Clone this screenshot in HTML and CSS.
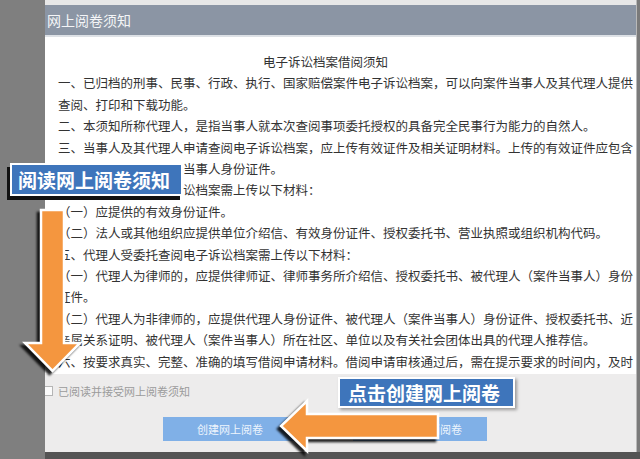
FILE: index.html
```html
<!DOCTYPE html>
<html lang="zh-CN">
<head>
<meta charset="utf-8">
<title>网上阅卷须知</title>
<link rel="stylesheet" href="styles.css">
</head>
<body>
<div class="screen">
  <div class="side"></div>
  <div class="dialog">
    <div class="topstrip"></div>
    <div class="titlebar">网上阅卷须知</div>
    <div class="content">
      <h1 class="doc-title">电子诉讼档案借阅须知</h1>
      <p>一、已归档的刑事、民事、行政、执行、国家赔偿案件电子诉讼档案，可以向案件当事人及其代理人提供<br>查阅、打印和下载功能。</p>
      <p>二、本须知所称代理人，是指当事人就本次查阅事项委托授权的具备完全民事行为能力的自然人。</p>
      <p>三、当事人及其代理人申请查阅电子诉讼档案，应上传有效证件及相关证明材料。上传的有效证件应包含<br>被代理人及其代理人的当事人身份证件。</p>
      <p>四、当事人查阅电子诉讼档案需上传以下材料：</p>
      <p>（一）应提供的有效身份证件。</p>
      <p>（二）法人或其他组织应提供单位介绍信、有效身份证件、授权委托书、营业执照或组织机构代码。</p>
      <p>五、代理人受委托查阅电子诉讼档案需上传以下材料：</p>
      <p>（一）代理人为律师的，应提供律师证、律师事务所介绍信、授权委托书、被代理人（案件当事人）身份<br>证件。</p>
      <p>（二）代理人为非律师的，应提供代理人身份证件、被代理人（案件当事人）身份证件、授权委托书、近<br>亲属关系证明、被代理人（案件当事人）所在社区、单位以及有关社会团体出具的代理人推荐信。</p>
      <p>六、按要求真实、完整、准确的填写借阅申请材料。借阅申请审核通过后，需在提示要求的时间内，及时<br>查阅电子诉讼档案。</p>
    </div>
    <div class="footer">
      <label class="agree"><span class="box"></span>已阅读并接受网上阅卷须知</label>
      <div class="actions">
        <button class="btn btn-create">创建网上阅卷</button>
        <button class="btn btn-other">取消阅卷</button>
      </div>
    </div>
  </div>
  <div class="rside"></div>
</div>
<div class="bottomband"><div class="bb-left"></div><div class="bb-right"></div></div>

<svg class="marks" width="640" height="459" viewBox="0 0 640 459" aria-hidden="true">
  <polygon points="41,210 64,210 64,343 80,343 52.5,371 25,343 41,343" fill="#f4963f" stroke="#ffffff" stroke-width="2.5"/>
  <polygon points="438,414 438,438 307,438 307,451 281,426 307,401 307,414" fill="#f4963f" stroke="#ffffff" stroke-width="2.5"/>
</svg>
<div class="callout callout-read">阅读网上阅卷须知</div>
<div class="callout callout-create">点击创建网上阅卷</div>
</body>
</html>
```

FILE: styles.css
```css
html, body {
  margin: 0;
  padding: 0;
}
body {
  width: 640px;
  height: 459px;
  overflow: hidden;
  position: relative;
  background: #7f7f7f;
  font-family: "Noto Sans CJK SC", "Noto Sans", sans-serif;
}
.screen {
  display: flex;
  height: 452px;
}
.side {
  width: 45px;
  background: #7f7f7f;
}
.rside {
  width: 3px;
  background: #7a7a7a;
}
.dialog {
  width: 592px;
  display: flex;
  flex-direction: column;
  border-right: 1px solid #b9b9b9;
  box-sizing: border-box;
  overflow: hidden;
  background: #ffffff;
}
.topstrip {
  height: 5px;
  background: #e7e7e7;
}
.titlebar {
  height: 30px;
  line-height: 30px;
  padding-left: 2px;
  background: #8b95a4;
  color: #f4f5f7;
  font-size: 14px;
  border-bottom: 2px solid #dde1e6;
}
.content {
  height: 337px;
  box-sizing: border-box;
  padding: 14px 0 0 13px;
  overflow: hidden;
  white-space: nowrap;
  font-size: 12.5px;
  line-height: 21.4px;
  color: #333333;
}
.doc-title {
  margin: 0;
  font-size: 12.5px;
  font-weight: normal;
  text-align: center;
  padding-right: 43px;
}
.content p {
  margin: 0;
}
.footer {
  height: 78px;
  box-sizing: border-box;
  background: #edecec;
  padding-top: 10px;
}
.agree {
  display: flex;
  align-items: center;
  height: 14px;
  font-size: 11px;
  color: #9b9b9b;
}
.box {
  width: 8px;
  height: 8px;
  margin-left: -2px;
  margin-right: 5px;
  border: 1px solid #b5b5b5;
  background: #fbfbfb;
}
.actions {
  display: flex;
  margin-top: 19px;
  padding-left: 118px;
  gap: 56px;
}
.btn {
  height: 24px;
  border: 0;
  padding: 0;
  background: #80b0e7;
  color: #eef5fd;
  font-family: "Noto Sans CJK SC", sans-serif;
  font-size: 11px;
}
.btn-create {
  width: 134px;
}
.btn-other {
  width: 134px;
  text-align: right;
  padding-right: 25px;
}
.bottomband {
  display: flex;
  height: 7px;
}
.bb-left {
  width: 45px;
  background: #7f7f7f;
}
.bb-right {
  flex: 1;
  background: #545454;
}
.marks {
  position: absolute;
  left: 0;
  top: 0;
  filter: drop-shadow(-3px 3px 1px rgba(0, 0, 0, 0.85));
}
.callout {
  position: absolute;
  box-sizing: border-box;
  border: 2px solid #ffffff;
  background: #3e75bb;
  color: #ffffff;
  font-weight: bold;
  font-size: 19px;
  white-space: nowrap;
}
.callout-read {
  left: 10px;
  top: 163px;
  width: 173px;
  height: 33px;
  line-height: 29px;
  padding-left: 6px;
  box-shadow: -3px 4px 0 #111111;
}
.callout-create {
  left: 338px;
  top: 377px;
  width: 177px;
  height: 31px;
  line-height: 27px;
  padding-left: 8px;
  box-shadow: 2px 2px 3px rgba(0, 0, 0, 0.35);
}
```
